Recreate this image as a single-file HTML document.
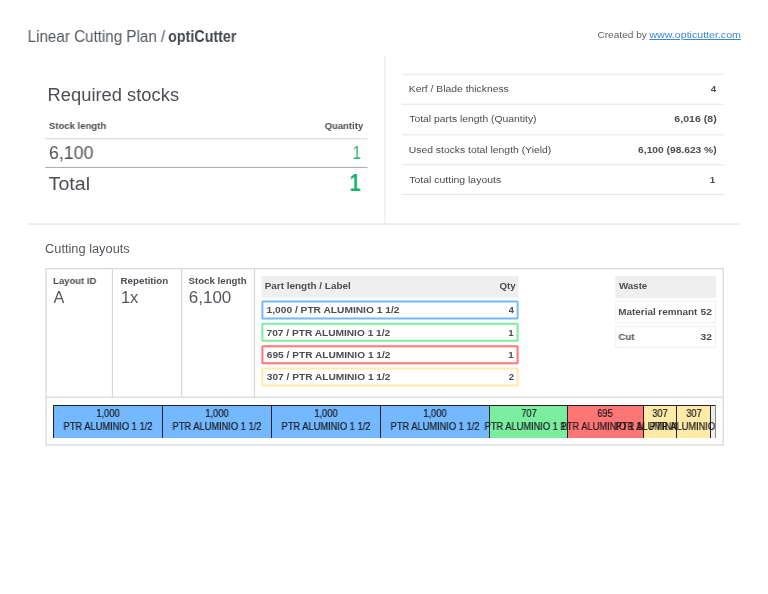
<!DOCTYPE html>
<html><head><meta charset="utf-8"><title>Linear Cutting Plan</title>
<style>
*{box-sizing:border-box;margin:0;padding:0}
html,body{width:768px;height:594px;background:#fff;overflow:hidden}
body{font-family:"Liberation Sans",sans-serif;color:#4a4d52;position:relative}
.t{position:absolute;left:0;top:0;white-space:nowrap;transform-origin:0 0;will-change:transform}
.r{position:absolute}
.seg{position:absolute;top:0;height:33px;border-left:1px solid #222;border-top:1px solid #222}
.seg span{will-change:transform;position:absolute;left:50%;top:0.5px;transform:translateX(-50%) scaleX(.93);white-space:nowrap;text-align:center;font-size:10px;line-height:13px;color:#17181a;-webkit-text-stroke:0.2px #17181a}
</style></head><body>
<svg class="r" style="left:0;top:0" width="768" height="594" viewBox="0 0 768 594">
<rect x="384.20" y="56.00" width="1.6" height="168" fill="#f1f1f1"/>
<rect x="27.70" y="223.40" width="712.1" height="1.3" fill="#e4e4e4"/>
<rect x="45.30" y="138.00" width="322.1" height="1.3" fill="#e0e0e0"/>
<rect x="45.30" y="166.90" width="322.1" height="1.1" fill="#b0b0b0"/>
<rect x="401.80" y="73.70" width="321.8" height="1.2" fill="#e9e9e9"/>
<rect x="401.80" y="103.70" width="321.8" height="1.2" fill="#e9e9e9"/>
<rect x="401.80" y="134.20" width="321.8" height="1.2" fill="#e9e9e9"/>
<rect x="401.80" y="164.20" width="321.8" height="1.2" fill="#e9e9e9"/>
<rect x="401.80" y="193.90" width="321.8" height="1.2" fill="#e9e9e9"/>
<rect x="46.00" y="268.60" width="677.2" height="176.4" fill="none" stroke="#d8d8d8" stroke-width="1.2" rx="0"/>
<rect x="111.80" y="268.60" width="1.2" height="128.6" fill="#d8d8d8"/>
<rect x="181.05" y="268.60" width="1.2" height="128.6" fill="#d8d8d8"/>
<rect x="253.85" y="268.60" width="1.2" height="128.6" fill="#d8d8d8"/>
<rect x="46.00" y="396.60" width="677.2" height="1.2" fill="#d8d8d8"/>
<rect x="261.40" y="276.10" width="257.2" height="21.6" fill="#efefef"/>
<rect x="262.40" y="301.55" width="255.2" height="17" fill="none" stroke="#74b9ff" stroke-width="2" rx="0.5"/>
<rect x="262.40" y="323.85" width="255.2" height="17" fill="none" stroke="#7bed9f" stroke-width="2" rx="0.5"/>
<rect x="262.40" y="346.15" width="255.2" height="17" fill="none" stroke="#ff7675" stroke-width="2" rx="0.5"/>
<rect x="262.40" y="368.45" width="255.2" height="17" fill="none" stroke="#ffeaa7" stroke-width="2" rx="0.5"/>
<rect x="615.20" y="276.10" width="100.9" height="21.8" fill="#efefef"/>
<rect x="615.70" y="301.40" width="99.9" height="21.3" fill="none" stroke="#efefef" stroke-width="1" rx="0"/>
<rect x="615.70" y="326.60" width="99.9" height="20.8" fill="none" stroke="#efefef" stroke-width="1" rx="0"/>
</svg>
<div class="r" style="left:52.9px;top:405px;width:663.4px;height:33px;overflow:hidden;background:#eee;border-right:1px solid #8c8c8c">
<div class="seg" style="left:657.35px;width:40px;background:#eee"></div>
<div class="seg" style="left:0.00px;width:109.12px;background:#74b9ff"><span>1,000<br>PTR ALUMINIO 1 1/2</span></div>
<div class="seg" style="left:109.12px;width:109.12px;background:#74b9ff"><span>1,000<br>PTR ALUMINIO 1 1/2</span></div>
<div class="seg" style="left:218.25px;width:109.12px;background:#74b9ff"><span>1,000<br>PTR ALUMINIO 1 1/2</span></div>
<div class="seg" style="left:327.37px;width:109.12px;background:#74b9ff"><span>1,000<br>PTR ALUMINIO 1 1/2</span></div>
<div class="seg" style="left:436.49px;width:77.28px;background:#7bed9f"><span>707<br>PTR ALUMINIO 1 1/2</span></div>
<div class="seg" style="left:513.77px;width:75.97px;background:#ff7675"><span>695<br>PTR ALUMINIO 1 1/2</span></div>
<div class="seg" style="left:589.74px;width:33.80px;background:#ffeaa7"><span>307<br>PTR ALUMINIO 1 1/2</span></div>
<div class="seg" style="left:623.55px;width:33.80px;background:#ffeaa7"><span>307<br>PTR ALUMINIO 1 1/2</span></div>
</div>
<div class="t" style="font-size:16px;line-height:19px;font-weight:400;color:#54585d;transform:translate(27.65px,27px) scaleX(0.9488);">Linear Cutting Plan /</div>
<div class="t" style="font-size:16px;line-height:19px;font-weight:700;color:#43474c;transform:translate(168.10px,27px) scaleX(0.8934);">optiCutter</div>
<div class="t" style="font-size:9.7px;line-height:12px;font-weight:400;color:#5c5f63;transform:translate(597.45px,29px) scaleX(1.0417);">Created by</div>
<div class="t" style="font-size:9.7px;line-height:12px;font-weight:400;color:#3b86d6;transform:translate(649.45px,29px) scaleX(1.0961);text-decoration:underline">www.opticutter.com</div>
<div class="t" style="font-size:18px;line-height:22px;font-weight:400;color:#4c4f54;transform:translate(47.60px,84px) scaleX(1.0185);">Required stocks</div>
<div class="t" style="font-size:9.7px;line-height:12px;font-weight:700;color:#484b50;transform:translate(48.85px,120px) scaleX(0.9878);">Stock length</div>
<div class="t" style="font-size:9.7px;line-height:12px;font-weight:700;color:#484b50;transform:translate(324.70px,120px) scaleX(0.9768);">Quantity</div>
<div class="t" style="font-size:18px;line-height:22px;font-weight:400;color:#4c4f54;transform:translate(48.90px,142px) scaleX(0.9896);">6,100</div>
<div class="t" style="font-size:18px;line-height:22px;font-weight:400;color:#2bb673;transform:translate(352.60px,142px) scaleX(0.8500);">1</div>
<div class="t" style="font-size:18px;line-height:22px;font-weight:400;color:#4c4f54;transform:translate(48.60px,173px) scaleX(1.0918);">Total</div>
<div class="t" style="font-size:23.6px;line-height:28px;font-weight:700;color:#1bb16a;transform:translate(349.55px,169px) scaleX(0.8500);">1</div>
<div class="t" style="font-size:9.7px;line-height:12px;font-weight:400;color:#484b50;transform:translate(408.75px,83px) scaleX(1.0676);">Kerf / Blade thickness</div>
<div class="t" style="font-size:9.7px;line-height:12px;font-weight:700;color:#4a4d52;transform:translate(710.85px,83px) scaleX(1.0000);">4</div>
<div class="t" style="font-size:9.7px;line-height:12px;font-weight:400;color:#484b50;transform:translate(409.25px,113px) scaleX(1.0699);">Total parts length (Quantity)</div>
<div class="t" style="font-size:9.7px;line-height:12px;font-weight:700;color:#4a4d52;transform:translate(674.30px,113px) scaleX(1.0928);">6,016 (8)</div>
<div class="t" style="font-size:9.7px;line-height:12px;font-weight:400;color:#484b50;transform:translate(408.75px,144px) scaleX(1.0698);">Used stocks total length (Yield)</div>
<div class="t" style="font-size:9.7px;line-height:12px;font-weight:700;color:#4a4d52;transform:translate(638.10px,144px) scaleX(1.0565);">6,100 (98.623 %)</div>
<div class="t" style="font-size:9.7px;line-height:12px;font-weight:400;color:#484b50;transform:translate(409.25px,174px) scaleX(1.0811);">Total cutting layouts</div>
<div class="t" style="font-size:9.7px;line-height:12px;font-weight:700;color:#4a4d52;transform:translate(709.75px,174px) scaleX(1.0000);">1</div>
<div class="t" style="font-size:12px;line-height:14px;font-weight:400;color:#54585d;transform:translate(45.05px,242px) scaleX(1.0665);">Cutting layouts</div>
<div class="t" style="font-size:9.7px;line-height:12px;font-weight:700;color:#4a4d52;transform:translate(53.10px,275px) scaleX(0.9792);">Layout ID</div>
<div class="t" style="font-size:16px;line-height:19px;font-weight:400;color:#54585d;transform:translate(53.60px,288px) scaleX(1.0191);">A</div>
<div class="t" style="font-size:9.7px;line-height:12px;font-weight:700;color:#4a4d52;transform:translate(120.50px,275px) scaleX(1.0087);">Repetition</div>
<div class="t" style="font-size:16px;line-height:19px;font-weight:400;color:#54585d;transform:translate(120.90px,288px) scaleX(1.0323);">1x</div>
<div class="t" style="font-size:9.7px;line-height:12px;font-weight:700;color:#4a4d52;transform:translate(188.45px,275px) scaleX(1.0017);">Stock length</div>
<div class="t" style="font-size:16px;line-height:19px;font-weight:400;color:#54585d;transform:translate(188.75px,288px) scaleX(1.0632);">6,100</div>
<div class="t" style="font-size:9.7px;line-height:12px;font-weight:700;color:#4a4d52;transform:translate(264.65px,280px) scaleX(1.0261);">Part length / Label</div>
<div class="t" style="font-size:9.7px;line-height:12px;font-weight:700;color:#4a4d52;transform:translate(499.50px,280px) scaleX(1.0000);">Qty</div>
<div class="t" style="font-size:9.7px;line-height:12px;font-weight:700;color:#4a4d52;transform:translate(266.55px,304px) scaleX(1.0531);">1,000 / PTR ALUMINIO 1 1/2</div>
<div class="t" style="font-size:9.7px;line-height:12px;font-weight:700;color:#4a4d52;transform:translate(508.50px,304px) scaleX(1.0000);">4</div>
<div class="t" style="font-size:9.7px;line-height:12px;font-weight:700;color:#4a4d52;transform:translate(266.55px,327px) scaleX(1.0473);">707 / PTR ALUMINIO 1 1/2</div>
<div class="t" style="font-size:9.7px;line-height:12px;font-weight:700;color:#4a4d52;transform:translate(508.35px,327px) scaleX(1.0000);">1</div>
<div class="t" style="font-size:9.7px;line-height:12px;font-weight:700;color:#4a4d52;transform:translate(266.80px,349px) scaleX(1.0473);">695 / PTR ALUMINIO 1 1/2</div>
<div class="t" style="font-size:9.7px;line-height:12px;font-weight:700;color:#4a4d52;transform:translate(508.35px,349px) scaleX(1.0000);">1</div>
<div class="t" style="font-size:9.7px;line-height:12px;font-weight:700;color:#4a4d52;transform:translate(266.80px,371px) scaleX(1.0473);">307 / PTR ALUMINIO 1 1/2</div>
<div class="t" style="font-size:9.7px;line-height:12px;font-weight:700;color:#4a4d52;transform:translate(508.75px,371px) scaleX(1.0000);">2</div>
<div class="t" style="font-size:9.7px;line-height:12px;font-weight:700;color:#4a4d52;transform:translate(619.00px,280px) scaleX(1.0036);">Waste</div>
<div class="t" style="font-size:9.7px;line-height:12px;font-weight:700;color:#4a4d52;transform:translate(618.25px,306px) scaleX(1.0208);">Material remnant</div>
<div class="t" style="font-size:9.7px;line-height:12px;font-weight:700;color:#4a4d52;transform:translate(700.45px,306px) scaleX(1.0604);">52</div>
<div class="t" style="font-size:9.7px;line-height:12px;font-weight:700;color:#4a4d52;transform:translate(618.50px,331px) scaleX(0.9903);">Cut</div>
<div class="t" style="font-size:9.7px;line-height:12px;font-weight:700;color:#4a4d52;transform:translate(700.45px,331px) scaleX(1.0604);">32</div>
</body></html>
